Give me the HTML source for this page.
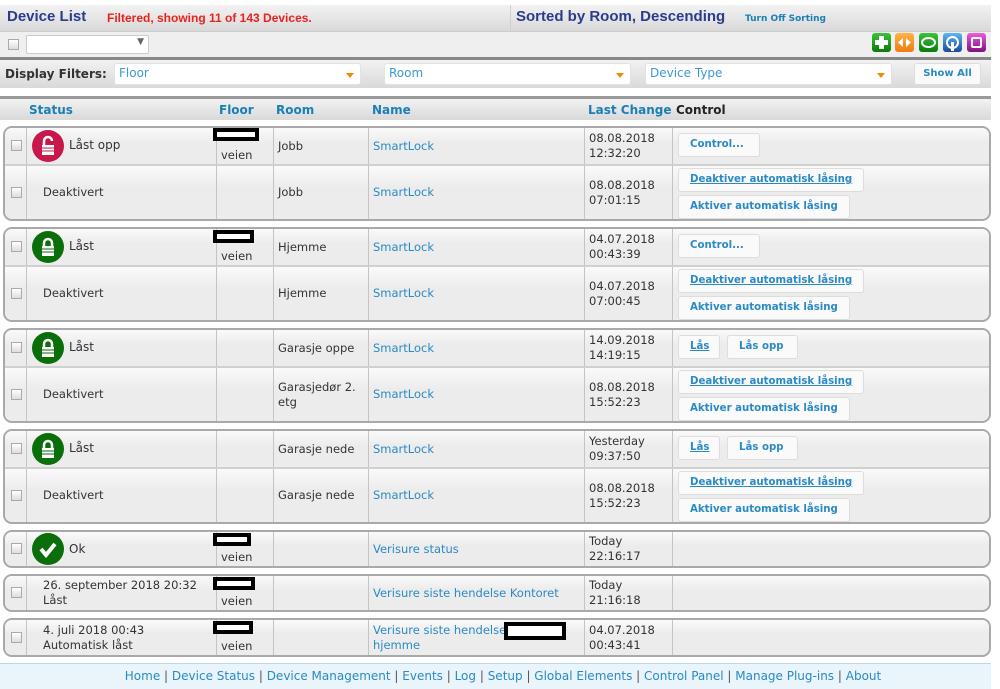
<!DOCTYPE html>
<html><head><meta charset="utf-8"><style>
*{margin:0;padding:0;box-sizing:border-box}
body{width:1000px;height:689px;background:#fff;font-family:"DejaVu Sans","Liberation Sans",sans-serif;font-size:11.5px;color:#333;position:relative;overflow:hidden}
.a{position:absolute}
.bar{background:linear-gradient(#f2f2f2,#d9d9d9)}
.lk{color:#2a8ac4}
.hd{color:#1a7fb5;font-weight:bold;font-size:12px}
.grp{position:absolute;left:3px;width:988px;border:2px solid #a9a9a9;border-radius:9px;overflow:hidden;background:#f0f0f0}
.row{position:absolute;left:0;width:100%;background:linear-gradient(#fafafa,#ececec 40%,#ececec)}
.row+.row{border-top:2px solid #d0d0d0}
.c{position:absolute;top:0;bottom:0;border-left:1px solid #c4c4c4;padding-left:4px;display:flex;align-items:center;line-height:15px}
.cb{position:absolute;left:6px;width:11px;height:11px;border:1px solid #aaa;background:linear-gradient(#fff,#ddd)}
.btn{position:absolute;height:24px;border:1px solid #ddd;border-radius:3px;background:#fafafa;color:#2a8ac4;font-weight:bold;font-size:10.2px;padding:0 11px;line-height:22px;white-space:nowrap}
.u{text-decoration:underline}
.ic{position:absolute;left:29px;width:32px;height:32px;border-radius:50%}
.red{position:absolute;height:13px;border:4px solid #000;background:#fff}
.sel{position:absolute;height:22px;background:#fff;border:1px solid #e2e2e2;border-radius:3px;color:#3a9ad0;font-size:12px;padding:2px 4px}
.sel:after{content:"";position:absolute;right:6px;top:9px;border:4px solid transparent;border-top:5px solid #f08a00}
.ti{position:absolute;top:33px;width:19px;height:19px;border-radius:3px}
</style></head><body>

<div class="a bar" style="left:0;top:5px;width:991px;height:27px;border-bottom:1px solid #ccc"></div>
<div class="a" style="left:7px;top:8px;font-size:15px;font-weight:bold;color:#2b3b8f;font-family:'Liberation Sans',sans-serif">Device List</div>
<div class="a" style="left:107px;top:11px;font-size:12px;font-weight:bold;color:#e8231e;font-family:'Liberation Sans',sans-serif">Filtered, showing 11 of 143 Devices.</div>
<div class="a" style="left:510px;top:5px;width:1px;height:52px;background:#d0d0d0"></div>
<div class="a" style="left:516px;top:8px;font-size:15px;font-weight:bold;color:#2b3b8f;font-family:'Liberation Sans',sans-serif">Sorted by Room, Descending</div>
<div class="a" style="left:745px;top:14px;font-size:9px;font-weight:bold;color:#1a7fb5">Turn Off Sorting</div>
<div class="a" style="left:0;top:32px;width:991px;height:25px;background:#efefef"></div>
<div class="cb" style="left:8px;top:39px"></div>
<div class="a" style="left:26px;top:35px;width:123px;height:19px;background:#fff;border:1px solid #ccc;border-radius:2px"><span style="position:absolute;right:4px;top:1px;font-size:9px;color:#666">▼</span></div>
<div class="ti" style="left:872px;background:linear-gradient(#3bc43b,#0a7a0a)"><span style="position:absolute;left:3px;top:7px;width:13px;height:5px;background:#fff"></span><span style="position:absolute;left:7px;top:3px;width:5px;height:13px;background:#fff"></span></div>
<div class="ti" style="left:895px;background:linear-gradient(#ffb24a,#ee7d10)"><svg width="19" height="19"><path d="M8 5L3 9.5 8 14zM11 5l5 4.5-5 4.5z" fill="#fff"/></svg></div>
<div class="ti" style="left:919px;background:linear-gradient(#3bc43b,#0a7a0a)"><span style="position:absolute;left:2px;top:4px;width:15px;height:11px;border:2px solid #fff;border-radius:50%"></span></div>
<div class="ti" style="left:943px;background:linear-gradient(#5fb8f0,#1a4a9a)"><span style="position:absolute;left:3px;top:3px;width:13px;height:13px;border:2px solid #fff;border-radius:50%"></span><span style="position:absolute;left:8px;top:9px;width:3px;height:9px;background:#fff"></span></div>
<div class="ti" style="left:967px;background:linear-gradient(#f05ae0,#801080)"><span style="position:absolute;left:4px;top:4px;width:11px;height:11px;border:2px solid #fff;border-radius:2px"></span></div>
<div class="a" style="left:0;top:57px;width:991px;height:3px;background:#888"></div>

<div class="a bar" style="left:0;top:60px;width:991px;height:28px"></div>
<div class="a" style="left:5px;top:67px;font-weight:bold;font-size:12px;color:#333">Display Filters:</div>
<div class="sel" style="left:114px;top:63px;width:247px">Floor</div>
<div class="sel" style="left:384px;top:63px;width:247px">Room</div>
<div class="sel" style="left:645px;top:63px;width:247px">Device Type</div>
<div class="a" style="left:914px;top:63px;width:67px;height:22px;background:#fafafa;border:1px solid #ddd;border-radius:3px;color:#2a8ac4;font-weight:bold;font-size:10px;text-align:center;line-height:20px">Show All</div>

<div class="a" style="left:0;top:96px;width:991px;height:3px;background:#999"></div>
<div class="a bar" style="left:0;top:99px;width:991px;height:21px"></div>
<div class="a hd" style="left:29px;top:103px">Status</div>
<div class="a hd" style="left:219px;top:103px">Floor</div>
<div class="a hd" style="left:276px;top:103px">Room</div>
<div class="a hd" style="left:372px;top:103px">Name</div>
<div class="a hd" style="left:588px;top:103px">Last Change</div>
<div class="a" style="left:676px;top:103px;font-weight:bold;font-size:12px;color:#222">Control</div>

<!-- Group 1 -->
<div class="grp" style="top:126px;height:95px">
 <div class="row" style="top:0;height:36px">
  <div class="cb" style="top:12px"></div>
  <div class="c" style="left:21px;width:190px"></div>
  <div class="ic" style="top:2px;left:27px;background:#c8174a"><svg width="32" height="32"><path d="M12 15v-4a4 4 0 0 1 8 0" stroke="#fff" stroke-width="2.5" fill="none"/><rect x="10" y="15" width="12" height="10" fill="#fff"/><path d="M10 18h12M10 21h12" stroke="#c8174a"/></svg></div>
  <div class="a" style="left:64px;top:10px;font-size:12px">Låst opp</div>
  <div class="c" style="left:211px;width:57px;align-items:flex-end;padding-bottom:1px">veien</div>
  <div class="red" style="left:208px;top:0;width:46px"></div>
  <div class="c" style="left:268px;width:95px">Jobb</div>
  <div class="c lk" style="left:363px;width:216px">SmartLock</div>
  <div class="c" style="left:579px;width:88px">08.08.2018<br>12:32:20</div>
  <div class="c" style="left:667px;width:330px"></div>
  <div class="btn" style="left:673px;top:5px;width:82px">Control...</div>
 </div>
 <div class="row" style="top:36px;height:55px">
  <div class="cb" style="top:21px"></div>
  <div class="c" style="left:21px;width:190px;padding-left:16px">Deaktivert</div>
  <div class="c" style="left:211px;width:57px"></div>
  <div class="c" style="left:268px;width:95px">Jobb</div>
  <div class="c lk" style="left:363px;width:216px">SmartLock</div>
  <div class="c" style="left:579px;width:88px">08.08.2018<br>07:01:15</div>
  <div class="c" style="left:667px;width:330px"></div>
  <div class="btn u" style="left:673px;top:2px">Deaktiver automatisk låsing</div>
  <div class="btn" style="left:673px;top:29px">Aktiver automatisk låsing</div>
 </div>
</div>

<!-- Group 2 -->
<div class="grp" style="top:227px;height:95px">
 <div class="row" style="top:0;height:36px">
  <div class="cb" style="top:12px"></div>
  <div class="c" style="left:21px;width:190px"></div>
  <div class="ic" style="top:2px;left:27px;background:#0a6e0a"><svg width="32" height="32"><path d="M12 15v-3a4 4 0 0 1 8 0v3" stroke="#fff" stroke-width="2.5" fill="none"/><rect x="10" y="15" width="12" height="10" fill="#fff"/><path d="M10 18h12M10 21h12" stroke="#0a6e0a"/></svg></div>
  <div class="a" style="left:64px;top:10px;font-size:12px">Låst</div>
  <div class="c" style="left:211px;width:57px;align-items:flex-end;padding-bottom:1px">veien</div>
  <div class="red" style="left:208px;top:1px;width:41px"></div>
  <div class="c" style="left:268px;width:95px">Hjemme</div>
  <div class="c lk" style="left:363px;width:216px">SmartLock</div>
  <div class="c" style="left:579px;width:88px">04.07.2018<br>00:43:39</div>
  <div class="c" style="left:667px;width:330px"></div>
  <div class="btn" style="left:673px;top:5px;width:82px">Control...</div>
 </div>
 <div class="row" style="top:36px;height:55px">
  <div class="cb" style="top:21px"></div>
  <div class="c" style="left:21px;width:190px;padding-left:16px">Deaktivert</div>
  <div class="c" style="left:211px;width:57px"></div>
  <div class="c" style="left:268px;width:95px">Hjemme</div>
  <div class="c lk" style="left:363px;width:216px">SmartLock</div>
  <div class="c" style="left:579px;width:88px">04.07.2018<br>07:00:45</div>
  <div class="c" style="left:667px;width:330px"></div>
  <div class="btn u" style="left:673px;top:2px">Deaktiver automatisk låsing</div>
  <div class="btn" style="left:673px;top:29px">Aktiver automatisk låsing</div>
 </div>
</div>

<!-- Group 3 -->
<div class="grp" style="top:328px;height:95px">
 <div class="row" style="top:0;height:36px">
  <div class="cb" style="top:12px"></div>
  <div class="c" style="left:21px;width:190px"></div>
  <div class="ic" style="top:2px;left:27px;background:#0a6e0a"><svg width="32" height="32"><path d="M12 15v-3a4 4 0 0 1 8 0v3" stroke="#fff" stroke-width="2.5" fill="none"/><rect x="10" y="15" width="12" height="10" fill="#fff"/><path d="M10 18h12M10 21h12" stroke="#0a6e0a"/></svg></div>
  <div class="a" style="left:64px;top:10px;font-size:12px">Låst</div>
  <div class="c" style="left:211px;width:57px"></div>
  <div class="c" style="left:268px;width:95px">Garasje oppe</div>
  <div class="c lk" style="left:363px;width:216px">SmartLock</div>
  <div class="c" style="left:579px;width:88px">14.09.2018<br>14:19:15</div>
  <div class="c" style="left:667px;width:330px"></div>
  <div class="btn u" style="left:673px;top:5px;width:42px">Lås</div>
  <div class="btn" style="left:722px;top:5px;width:71px">Lås opp</div>
 </div>
 <div class="row" style="top:36px;height:55px">
  <div class="cb" style="top:21px"></div>
  <div class="c" style="left:21px;width:190px;padding-left:16px">Deaktivert</div>
  <div class="c" style="left:211px;width:57px"></div>
  <div class="c" style="left:268px;width:95px">Garasjedør 2.<br>etg</div>
  <div class="c lk" style="left:363px;width:216px">SmartLock</div>
  <div class="c" style="left:579px;width:88px">08.08.2018<br>15:52:23</div>
  <div class="c" style="left:667px;width:330px"></div>
  <div class="btn u" style="left:673px;top:2px">Deaktiver automatisk låsing</div>
  <div class="btn" style="left:673px;top:29px">Aktiver automatisk låsing</div>
 </div>
</div>

<!-- Group 4 -->
<div class="grp" style="top:429px;height:95px">
 <div class="row" style="top:0;height:36px">
  <div class="cb" style="top:12px"></div>
  <div class="c" style="left:21px;width:190px"></div>
  <div class="ic" style="top:2px;left:27px;background:#0a6e0a"><svg width="32" height="32"><path d="M12 15v-3a4 4 0 0 1 8 0v3" stroke="#fff" stroke-width="2.5" fill="none"/><rect x="10" y="15" width="12" height="10" fill="#fff"/><path d="M10 18h12M10 21h12" stroke="#0a6e0a"/></svg></div>
  <div class="a" style="left:64px;top:10px;font-size:12px">Låst</div>
  <div class="c" style="left:211px;width:57px"></div>
  <div class="c" style="left:268px;width:95px">Garasje nede</div>
  <div class="c lk" style="left:363px;width:216px">SmartLock</div>
  <div class="c" style="left:579px;width:88px">Yesterday<br>09:37:50</div>
  <div class="c" style="left:667px;width:330px"></div>
  <div class="btn u" style="left:673px;top:5px;width:42px">Lås</div>
  <div class="btn" style="left:722px;top:5px;width:71px">Lås opp</div>
 </div>
 <div class="row" style="top:36px;height:55px">
  <div class="cb" style="top:21px"></div>
  <div class="c" style="left:21px;width:190px;padding-left:16px">Deaktivert</div>
  <div class="c" style="left:211px;width:57px"></div>
  <div class="c" style="left:268px;width:95px">Garasje nede</div>
  <div class="c lk" style="left:363px;width:216px">SmartLock</div>
  <div class="c" style="left:579px;width:88px">08.08.2018<br>15:52:23</div>
  <div class="c" style="left:667px;width:330px"></div>
  <div class="btn u" style="left:673px;top:2px">Deaktiver automatisk låsing</div>
  <div class="btn" style="left:673px;top:29px">Aktiver automatisk låsing</div>
 </div>
</div>

<!-- Group 5 -->
<div class="grp" style="top:530px;height:38px">
 <div class="row" style="top:0;height:34px">
  <div class="cb" style="top:11px"></div>
  <div class="c" style="left:21px;width:190px"></div>
  <div class="ic" style="top:1px;left:27px;background:#0a6e0a"><svg width="32" height="32"><path d="M9 16l5 6 9-11" stroke="#fff" stroke-width="4" fill="none"/></svg></div>
  <div class="a" style="left:64px;top:10px;font-size:12px">Ok</div>
  <div class="c" style="left:211px;width:57px;align-items:flex-end;padding-bottom:1px">veien</div>
  <div class="red" style="left:208px;top:1px;width:38px"></div>
  <div class="c" style="left:268px;width:95px"></div>
  <div class="c lk" style="left:363px;width:216px">Verisure status</div>
  <div class="c" style="left:579px;width:88px">Today<br>22:16:17</div>
  <div class="c" style="left:667px;width:330px"></div>
 </div>
</div>

<!-- Group 6 -->
<div class="grp" style="top:574px;height:38px">
 <div class="row" style="top:0;height:34px">
  <div class="cb" style="top:11px"></div>
  <div class="c" style="left:21px;width:190px;padding-left:16px">26. september 2018 20:32<br>Låst</div>
  <div class="c" style="left:211px;width:57px;align-items:flex-end;padding-bottom:1px">veien</div>
  <div class="red" style="left:208px;top:1px;width:42px"></div>
  <div class="c" style="left:268px;width:95px"></div>
  <div class="c lk" style="left:363px;width:216px">Verisure siste hendelse Kontoret</div>
  <div class="c" style="left:579px;width:88px">Today<br>21:16:18</div>
  <div class="c" style="left:667px;width:330px"></div>
 </div>
</div>

<!-- Group 7 -->
<div class="grp" style="top:618px;height:39px">
 <div class="row" style="top:0;height:35px">
  <div class="cb" style="top:12px"></div>
  <div class="c" style="left:21px;width:190px;padding-left:16px">4. juli 2018 00:43<br>Automatisk låst</div>
  <div class="c" style="left:211px;width:57px;align-items:flex-end;padding-bottom:1px">veien</div>
  <div class="red" style="left:208px;top:1px;width:40px"></div>
  <div class="c" style="left:268px;width:95px"></div>
  <div class="c lk" style="left:363px;width:216px">Verisure siste hendelse<br>hjemme</div>
  <div class="red" style="left:499px;top:2px;width:62px;height:18px"></div>
  <div class="c" style="left:579px;width:88px">04.07.2018<br>00:43:41</div>
  <div class="c" style="left:667px;width:330px"></div>
 </div>
</div>

<div class="a" style="left:0;top:663px;width:991px;height:26px;background:#eaf4fb;border-top:1px solid #b8d8ec;text-align:center;line-height:25px;font-size:12px;color:#2a8ac4;padding-left:15px">Home <span style="color:#555">|</span> Device Status <span style="color:#555">|</span> Device Management <span style="color:#555">|</span> Events <span style="color:#555">|</span> Log <span style="color:#555">|</span> Setup <span style="color:#555">|</span> Global Elements <span style="color:#555">|</span> Control Panel <span style="color:#555">|</span> Manage Plug-ins <span style="color:#555">|</span> About</div>
</body></html>
